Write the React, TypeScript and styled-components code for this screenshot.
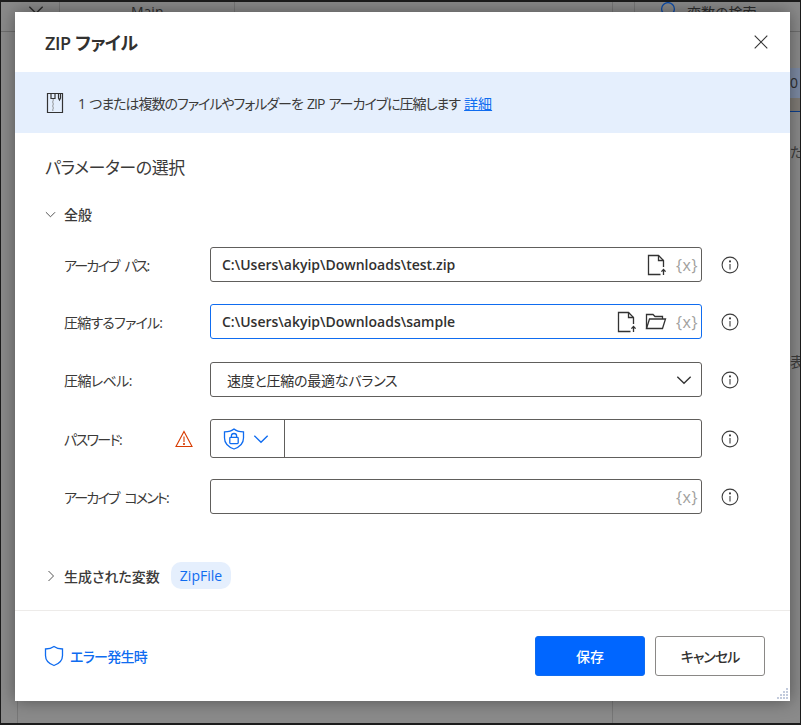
import React from 'react'
import styled, { createGlobalStyle } from 'styled-components'

const fontStack = '"Open Sans", "Noto Sans CJK JP", "Noto Sans", sans-serif'

const GlobalStyle = createGlobalStyle`
  html, body {
    margin: 0;
    padding: 0;
    width: 801px;
    height: 725px;
    overflow: hidden;
    background: #8a8a8a;
    font-family: ${fontStack};
    font-feature-settings: "palt";
  }
  * { box-sizing: border-box; }
`

const FileUploadIcon = () => (
  <svg width="20" height="22" viewBox="0 0 20 22" fill="none" stroke="#333" strokeWidth="1.3">
    <path d="M13.5 20.5H1.5V1.5H11.5L16.5 6.5V13" />
    <path d="M11.5 1.5V6.5H16.5" />
    <path d="M16.5 21V15.5M14.4 17.6L16.5 15.5L18.6 17.6" />
  </svg>
)

const FolderIcon = () => (
  <svg width="22" height="18" viewBox="0 0 22 18" fill="none" stroke="#333" strokeWidth="1.3">
    <path d="M1.5 15.5V1.5H8L10 3.5H17.5V6" />
    <path d="M1.5 15.5L4.5 6H20.5L17.5 15.5H1.5Z" />
  </svg>
)

const InfoIcon = () => (
  <svg width="18" height="18" viewBox="0 0 18 18" fill="none" stroke="#3d3d3d" strokeWidth="1.1">
    <circle cx="9" cy="9" r="7.9" />
    <path d="M9 8V13.4" />
    <circle cx="9" cy="5.4" r="0.5" fill="#3d3d3d" />
  </svg>
)

const ChevronDown = ({ color = '#444', size = 12 }: { color?: string; size?: number }) => (
  <svg width={size} height={size} viewBox="0 0 12 12" fill="none" stroke={color} strokeWidth="1">
    <path d="M1 3.5L6 8.5L11 3.5" />
  </svg>
)

const ChevronRight = () => (
  <svg width="12" height="12" viewBox="0 0 12 12" fill="none" stroke="#555" strokeWidth="1">
    <path d="M3.5 1L8.5 6L3.5 11" />
  </svg>
)

const ZipIcon = () => (
  <svg width="20" height="22" viewBox="0 0 20 22" fill="none" stroke="#333" strokeWidth="1.2">
    <path d="M2.5 1.5H17.5V20.5H2.5Z" />
    <path d="M6 1.5V6.5H10V1.5" />
    <path d="M13.5 1.5V6L14.5 8L15.5 6V1.5" />
    <path d="M7.5 8H9M7 10H8.5M7.5 12H9M7 14H8.5M7.5 16H9M7 18H8.5" strokeWidth="1" stroke="#777" />
  </svg>
)

const ShieldLockIcon = () => (
  <svg width="22" height="22" viewBox="0 0 22 22" fill="none" stroke="#0f6cf0" strokeWidth="1.3">
    <path d="M11 1C13 2.8 16 3.7 20.5 3.8V10C20.5 15.3 16.5 19 11 21C5.5 19 1.5 15.3 1.5 10V3.8C6 3.7 9 2.8 11 1Z" />
    <rect x="6.8" y="9.4" width="8.4" height="6.2" rx="0.8" />
    <path d="M8.4 9.2V7.8C8.4 6.3 9.6 5.5 11 5.5C12.4 5.5 13.6 6.3 13.6 7.8V9.2" />
  </svg>
)

const ShieldIcon = () => (
  <svg width="20" height="22" viewBox="0 0 20 22" fill="none" stroke="#0f6cf0" strokeWidth="1.3">
    <path d="M10 1.5C12.4 3.2 15.2 3.9 18.5 4V10.5C18.5 15.5 15 18.8 10 20.5C5 18.8 1.5 15.5 1.5 10.5V4C4.8 3.9 7.6 3.2 10 1.5Z" />
  </svg>
)

const WarningIcon = () => (
  <svg width="18" height="18" viewBox="0 0 18 18" fill="none" stroke="#d83b01" strokeWidth="1.1">
    <path d="M9 1.5L17 16.5H1L9 1.5Z" />
    <path d="M9 6.5V12" />
    <circle cx="9" cy="14" r="0.5" fill="#d83b01" />
  </svg>
)

const CloseIcon = () => (
  <svg width="14" height="14" viewBox="0 0 14 14" fill="none" stroke="#333" strokeWidth="1.1">
    <path d="M0.7 0.7L13.3 13.3M13.3 0.7L0.7 13.3" />
  </svg>
)

const SearchIcon = () => (
  <svg width="18" height="18" viewBox="0 0 18 18" fill="none" stroke="#0b4aa8" strokeWidth="1.3">
    <circle cx="9" cy="7" r="6.4" />
  </svg>
)

const GripIcon = () => (
  <svg width="14" height="14" viewBox="0 0 14 14" fill="#c3cbdc">
    {[
      [11, 0],
      [8, 3],
      [11, 3],
      [5, 6],
      [8, 6],
      [11, 6],
      [2, 9],
      [5, 9],
      [8, 9],
      [11, 9],
    ].map(([x, y]) => (
      <rect key={`${x}-${y}`} x={x} y={y + 2} width="2" height="2" />
    ))}
  </svg>
)

const App = () => {
  return (
    <>
      <GlobalStyle />
      <Backdrop>
        <BackTopBar>
          <BackChevronCell>
            <ChevronDown color="#2b2b2b" size={16} />
          </BackChevronCell>
          <BackTabCell>Main</BackTabCell>
          <BackSpacer />
          <BackNarrowCell />
          <BackSearchCell>
            <SearchIcon />
            <BackSearchText>変数の検索</BackSearchText>
          </BackSearchCell>
        </BackTopBar>
        <BackBody>
          <BackRail />
          <BackCanvas />
          <BackSide>
            <BackSideBand>0</BackSideBand>
            <BackSideTint />
            <BackSideText $gap={30}>だ</BackSideText>
            <BackSideText $gap={190}>表</BackSideText>
          </BackSide>
        </BackBody>
      </Backdrop>

      <Dialog>
        <DialogHeader>
          <DialogTitle>ZIP ファイル</DialogTitle>
          <CloseButton>
            <CloseIcon />
          </CloseButton>
        </DialogHeader>
        <Banner>
          <ZipIcon />
          <BannerText>
            1 つまたは複数のファイルやフォルダーを ZIP アーカイブに圧縮します <BannerLink>詳細</BannerLink>
          </BannerText>
        </Banner>

        <DialogBody>
          <SectionTitle>パラメーターの選択</SectionTitle>
          <GroupHeader>
            <ChevronDown size={11} />
            <GroupName>全般</GroupName>
          </GroupHeader>

          <FormRows>
            <FormRow $gap={22}>
              <FieldLabel $tracking={-1.8}>アーカイブ パス:</FieldLabel>
              <Field>
                <FieldValue>C:\Users\akyip\Downloads\test.zip</FieldValue>
                <FileUploadIcon />
                <VarToken>{'{x}'}</VarToken>
              </Field>
              <InfoIcon />
            </FormRow>

            <FormRow $gap={23}>
              <FieldLabel $tracking={-0.8}>圧縮するファイル:</FieldLabel>
              <Field $focused>
                <FieldValue>C:\Users\akyip\Downloads\sample</FieldValue>
                <FileUploadIcon />
                <FolderGap>
                  <FolderIcon />
                </FolderGap>
                <VarToken>{'{x}'}</VarToken>
              </Field>
              <InfoIcon />
            </FormRow>

            <FormRow $gap={22}>
              <FieldLabel $tracking={-0.6}>圧縮レベル:</FieldLabel>
              <Field>
                <SelectValue>速度と圧縮の最適なバランス</SelectValue>
                <SelectArrow>
                  <ChevronDown color="#333" size={16} />
                </SelectArrow>
              </Field>
              <InfoIcon />
            </FormRow>

            <FormRow $gap={21}>
              <PasswordLabel>
                <FieldLabel $tracking={-1.6}>パスワード:</FieldLabel>
                <WarningIcon />
              </PasswordLabel>
              <PasswordField>
                <PasswordMode>
                  <ShieldLockIcon />
                  <ChevronDown color="#0f6cf0" size={16} />
                </PasswordMode>
              </PasswordField>
              <InfoIcon />
            </FormRow>

            <FormRow $gap={22}>
              <FieldLabel $tracking={-1.8}>アーカイブ コメント:</FieldLabel>
              <Field>
                <FieldValue />
                <VarToken>{'{x}'}</VarToken>
              </Field>
              <InfoIcon />
            </FormRow>
          </FormRows>

          <OutputRow>
            <ChevronRight />
            <GroupName>生成された変数</GroupName>
            <VariablePill>ZipFile</VariablePill>
          </OutputRow>
        </DialogBody>

        <DialogFooter>
          <ErrorLink>
            <ShieldIcon />
            <span>エラー発生時</span>
          </ErrorLink>
          <FooterButtons>
            <PrimaryButton>保存</PrimaryButton>
            <SecondaryButton>キャンセル</SecondaryButton>
          </FooterButtons>
        </DialogFooter>
        <Grip>
          <GripIcon />
        </Grip>
      </Dialog>
    </>
  )
}

export default App

const Backdrop = styled.div`
  width: 801px;
  height: 725px;
  display: flex;
  flex-direction: column;
  border: 1px solid #1c1c1c;
  border-width: 2px 1px 2px 1px;
  background: #8a8a8a;
  color: #2e2e2e;
  overflow: hidden;
`

const BackTopBar = styled.div`
  height: 30px;
  display: flex;
  border-bottom: 1px solid #6e6e6e;
  font-size: 14px;
`

const BackChevronCell = styled.div`
  width: 59px;
  padding-left: 27px;
  display: flex;
  align-items: flex-start;
  border-right: 1px solid #777;
`

const BackTabCell = styled.div`
  width: 175px;
  padding: 3px 0 0 71px;
  line-height: 14px;
  border-right: 1px solid #777;
`

const BackSpacer = styled.div`
  flex: 1;
  border-right: 1px solid #777;
`

const BackNarrowCell = styled.div`
  width: 22px;
  border-right: 1px solid #777;
`

const BackSearchCell = styled.div`
  width: 165px;
  padding-left: 24px;
  display: flex;
  gap: 10px;
`

const BackSearchText = styled.span`
  margin-top: 3px;
  line-height: 16px;
`

const BackBody = styled.div`
  flex: 1;
  display: flex;
`

const BackRail = styled.div`
  width: 17px;
  border-right: 1px solid #777;
`

const BackCanvas = styled.div`
  flex: 1;
  border-right: 1px solid #777;
  margin-right: 22px;
`

const BackSide = styled.div`
  width: 165px;
  padding-top: 36px;
  display: flex;
  flex-direction: column;
  font-size: 14px;
`

const BackSideBand = styled.div`
  height: 30px;
  padding-left: 155px;
  line-height: 30px;
  background: #7c8aa3;
`

const BackSideTint = styled.div`
  height: 14px;
  background: #7f7b75;
  border-bottom: 1px solid #0b3f8f;
`

const BackSideText = styled.div<{ $gap: number }>`
  margin-top: ${(p) => p.$gap}px;
  padding-left: 155px;
  line-height: 20px;
  color: #3c3c3c;
  white-space: nowrap;
`

const Dialog = styled.div`
  position: absolute;
  left: 15px;
  top: 12px;
  width: 775px;
  height: 689px;
  display: flex;
  flex-direction: column;
  background: #fff;
  color: #323130;
  box-shadow: 0 0 16px rgba(0, 0, 0, 0.4);
`

const DialogHeader = styled.div`
  height: 60px;
  padding: 0 22px 0 30px;
  display: flex;
  align-items: center;
  justify-content: space-between;
`

const DialogTitle = styled.h1`
  margin: 0;
  font-size: 18px;
  font-weight: 600;
  letter-spacing: -0.4px;
  color: #323130;
`

const CloseButton = styled.div`
  width: 14px;
  height: 14px;
  display: flex;
`

const Banner = styled.div`
  height: 61px;
  padding: 0 30px;
  display: flex;
  align-items: center;
  gap: 13px;
  background: #e5effd;
`

const BannerText = styled.div`
  font-size: 14px;
  letter-spacing: -1px;
  word-spacing: 1.5px;
  color: #3b3a39;
`

const BannerLink = styled.a`
  letter-spacing: 0;
  color: #0f6cf0;
  text-decoration: underline;
`

const DialogBody = styled.div`
  flex: 1;
  padding: 22px 30px 0;
  display: flex;
  flex-direction: column;
`

const SectionTitle = styled.h2`
  margin: 0;
  font-size: 17px;
  line-height: 26px;
  font-weight: 400;
  letter-spacing: -0.45px;
  color: #3b3a39;
`

const GroupHeader = styled.div`
  margin-top: 23px;
  height: 20px;
  display: flex;
  align-items: center;
  gap: 8px;
`

const GroupName = styled.span`
  font-size: 14px;
  font-weight: 500;
  color: #3b3a39;
`

const FormRows = styled.div`
  margin-top: 23px;
  padding-left: 19px;
  display: flex;
  flex-direction: column;
`

const FormRow = styled.div<{ $gap: number }>`
  margin-bottom: ${(p) => p.$gap}px;
  display: grid;
  grid-template-columns: 146px 492px 18px;
  align-items: center;

  & > svg {
    margin-left: 19px;
  }
`

const FieldLabel = styled.label<{ $tracking: number }>`
  font-size: 14px;
  letter-spacing: ${(p) => p.$tracking}px;
  word-spacing: 4px;
  color: #3b3a39;
  white-space: nowrap;
`

const PasswordLabel = styled.div`
  display: flex;
  align-items: center;
  justify-content: space-between;
  padding-right: 17px;
`

const Field = styled.div<{ $focused?: boolean }>`
  height: 35px;
  padding: 0 4px 0 11px;
  display: flex;
  align-items: center;
  border: 1px solid ${(p) => (p.$focused ? '#0f6cf0' : '#605e5c')};
  border-radius: 3px;
  background: #fff;
`

const FieldValue = styled.div`
  flex: 1;
  font-size: 14px;
  font-weight: 600;
  color: #323130;
`

const FolderGap = styled.span`
  display: flex;
  margin-left: 8px;
`

const VarToken = styled.span`
  width: 21px;
  margin-left: 9px;
  font-size: 16px;
  letter-spacing: 0.5px;
  text-align: center;
  color: #a19f9d;
`

const SelectValue = styled.div`
  flex: 1;
  padding-left: 5px;
  font-size: 14px;
  letter-spacing: -0.25px;
  color: #323130;
`

const SelectArrow = styled.span`
  display: flex;
  margin-right: 5px;
`

const PasswordField = styled.div`
  height: 39px;
  display: flex;
  border: 1px solid #605e5c;
  border-radius: 3px;
`

const PasswordMode = styled.div`
  width: 74px;
  padding-left: 12px;
  display: flex;
  align-items: center;
  gap: 8px;
  border-right: 1px solid #605e5c;
`

const OutputRow = styled.div`
  margin-top: 26px;
  height: 27px;
  display: flex;
  align-items: center;
  gap: 7px;
`

const VariablePill = styled.span`
  margin-left: 4px;
  height: 27px;
  padding: 0 9px;
  display: flex;
  align-items: center;
  font-size: 14px;
  color: #0f6cf0;
  background: #e5effd;
  border-radius: 10px;
`

const DialogFooter = styled.div`
  height: 91px;
  padding: 0 25px 0 29px;
  display: flex;
  align-items: center;
  justify-content: space-between;
  border-top: 1px solid #edebe9;
`

const ErrorLink = styled.div`
  display: flex;
  align-items: center;
  gap: 6px;
  font-size: 14px;
  font-weight: 500;
  letter-spacing: -0.7px;
  color: #0f6cf0;
`

const FooterButtons = styled.div`
  display: flex;
  gap: 10px;
`

const PrimaryButton = styled.button`
  width: 110px;
  height: 40px;
  border: 1px solid #0f6cf0;
  border-radius: 3px;
  background: #0066ff;
  color: #fff;
  font-family: inherit;
  font-feature-settings: inherit;
  font-size: 14px;
  font-weight: 500;
`

const SecondaryButton = styled.button`
  width: 110px;
  height: 40px;
  border: 1px solid #8a8886;
  border-radius: 3px;
  background: #fff;
  color: #323130;
  font-family: inherit;
  font-feature-settings: inherit;
  font-size: 14px;
  font-weight: 500;
  letter-spacing: -1px;
`

const Grip = styled.div`
  position: absolute;
  right: 1px;
  bottom: 1px;
  display: flex;
`
